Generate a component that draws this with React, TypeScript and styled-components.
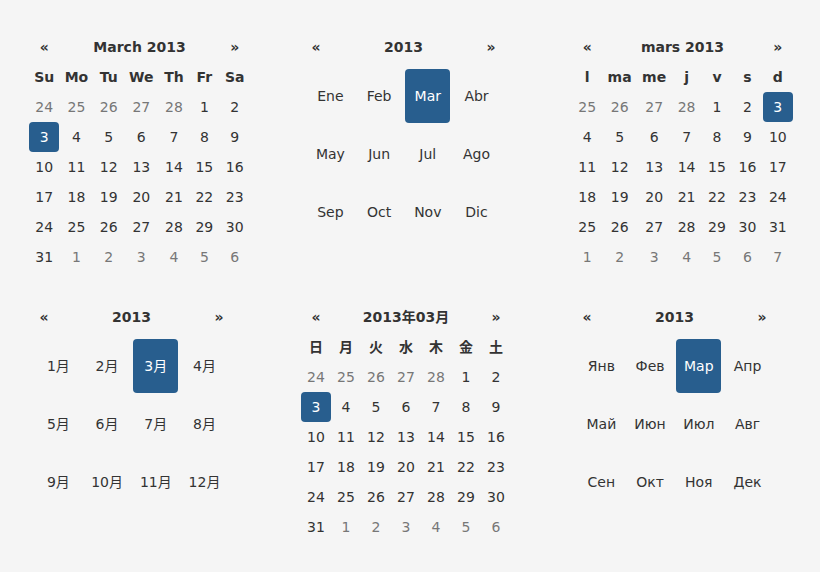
import React from "react";
import styled, { createGlobalStyle } from "styled-components";

const GlobalStyle = createGlobalStyle`
  html, body {
    margin: 0;
    padding: 0;
    background: #f5f5f5;
  }
  body {
    font-family: "DejaVu Sans", "Noto Sans CJK JP", sans-serif;
    font-size: 14px;
    line-height: 20px;
    color: #333;
  }
`;

const Page = styled.div`
  display: grid;
  grid-template-columns: 272px 271px 248px;
  grid-template-rows: 240px 240px;
  row-gap: 30px;
  padding: 32px 0 0 29px;
  width: 820px;
  height: 572px;
  box-sizing: border-box;
  align-items: start;
  justify-items: start;
`;

const Table = styled.table<{ $width?: number }>`
  border-collapse: collapse;
  border-spacing: 0;
  margin: 0;
  ${(p) => (p.$width ? `width: ${p.$width}px;` : "")}
  font-family: "DejaVu Sans", "Noto Sans CJK JP", sans-serif;
`;

const HeadCell = styled.th`
  box-sizing: content-box;
  text-align: center;
  width: 20px;
  height: 20px;
  padding: 5px;
  font-weight: bold;
  color: #333;
  border-radius: 4px;
  white-space: nowrap;
`;

const NavCell = styled(HeadCell)`
  font-size: 14px;
`;

const TitleCell = styled(HeadCell)`
  width: auto;
`;

const DayCell = styled.td<{ $muted?: boolean; $active?: boolean }>`
  box-sizing: content-box;
  text-align: center;
  width: 20px;
  height: 20px;
  padding: 5px;
  border-radius: 4px;
  color: ${(p) => (p.$active ? "#fff" : p.$muted ? "#777" : "#333")};
  background: ${(p) => (p.$active ? "#285e8e" : "transparent")};
`;

const MonthBody = styled.td`
  padding: 5px;
`;

const MonthItem = styled.span<{ $active?: boolean }>`
  display: block;
  float: left;
  width: 23%;
  height: 54px;
  line-height: 54px;
  margin: 1%;
  text-align: center;
  border-radius: 4px;
  color: ${(p) => (p.$active ? "#fff" : "#333")};
  background: ${(p) => (p.$active ? "#285e8e" : "transparent")};
`;

type Day = { n: number; muted: boolean; active: boolean };

function buildDays(startOld: number, trailing: number): Day[] {
  const days: Day[] = [];
  for (let d = startOld; d <= 28; d++) days.push({ n: d, muted: true, active: false });
  for (let d = 1; d <= 31; d++) days.push({ n: d, muted: false, active: d === 3 });
  for (let d = 1; d <= trailing; d++) days.push({ n: d, muted: true, active: false });
  return days;
}

function DayPicker({
  title,
  dow,
  days,
  width,
}: {
  title: string;
  dow: string[];
  days: Day[];
  width?: number;
}) {
  const weeks: Day[][] = [];
  for (let i = 0; i < days.length; i += 7) weeks.push(days.slice(i, i + 7));
  return (
    <Table $width={width}>
      <thead>
        <tr>
          <NavCell>«</NavCell>
          <TitleCell colSpan={5}>{title}</TitleCell>
          <NavCell>»</NavCell>
        </tr>
        <tr>
          {dow.map((d) => (
            <HeadCell key={d}>{d}</HeadCell>
          ))}
        </tr>
      </thead>
      <tbody>
        {weeks.map((w, i) => (
          <tr key={i}>
            {w.map((d, j) => (
              <DayCell key={j} $muted={d.muted} $active={d.active}>
                {d.n}
              </DayCell>
            ))}
          </tr>
        ))}
      </tbody>
    </Table>
  );
}

function MonthPicker({ months }: { months: string[] }) {
  return (
    <Table $width={205}>
      <thead>
        <tr>
          <NavCell>«</NavCell>
          <TitleCell colSpan={5}>2013</TitleCell>
          <NavCell>»</NavCell>
        </tr>
      </thead>
      <tbody>
        <tr>
          <MonthBody colSpan={7}>
            {months.map((m, i) => (
              <MonthItem key={m} $active={i === 2}>
                {m}
              </MonthItem>
            ))}
          </MonthBody>
        </tr>
      </tbody>
    </Table>
  );
}

const esMonths = ["Ene", "Feb", "Mar", "Abr", "May", "Jun", "Jul", "Ago", "Sep", "Oct", "Nov", "Dic"];
const jaMonths = ["1月", "2月", "3月", "4月", "5月", "6月", "7月", "8月", "9月", "10月", "11月", "12月"];
const ruMonths = ["Янв", "Фев", "Мар", "Апр", "Май", "Июн", "Июл", "Авг", "Сен", "Окт", "Ноя", "Дек"];

export default function App() {
  return (
    <>
      <GlobalStyle />
      <Page>
        <DayPicker
          title="March 2013"
          dow={["Su", "Mo", "Tu", "We", "Th", "Fr", "Sa"]}
          days={buildDays(24, 6)}
          width={221}
        />
        <MonthPicker months={esMonths} />
        <DayPicker
          title="mars 2013"
          dow={["l", "ma", "me", "j", "v", "s", "d"]}
          days={buildDays(25, 7)}
          width={221}
        />
        <MonthPicker months={jaMonths} />
        <DayPicker
          title="2013年03月"
          dow={["日", "月", "火", "水", "木", "金", "土"]}
          days={buildDays(24, 6)}
        />
        <MonthPicker months={ruMonths} />
      </Page>
    </>
  );
}
